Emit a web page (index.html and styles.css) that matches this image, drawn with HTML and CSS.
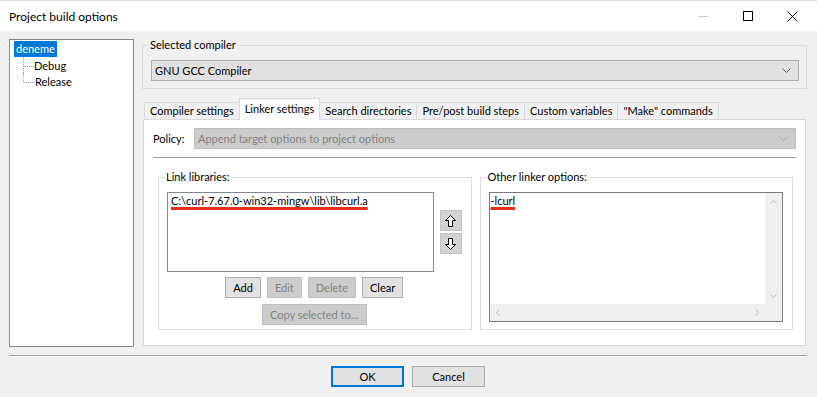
FILE: index.html
```html
<!doctype html>
<html>
<head>
    <meta charset="utf-8">
    <title>Project build options</title>
    <link rel="stylesheet" href="styles.css">
</head>
<body>
<div class="window">
    <div class="titlebar">
        <span class="title">Project build options</span>
        <div class="caption">
            <span class="cap"><svg width="10" height="10" viewBox="0 0 10 10"><path d="M0 5.5H10" stroke="#c8c8c8"/></svg></span>
            <span class="cap"><svg width="10" height="10" viewBox="0 0 10 10"><rect x="0.5" y="0.5" width="9" height="9" fill="none" stroke="#000"/></svg></span>
            <span class="cap"><svg width="11" height="11" viewBox="0 0 11 11"><path d="M0.5 0.5L10.5 10.5M10.5 0.5L0.5 10.5" stroke="#000"/></svg></span>
        </div>
    </div>

    <div class="client">
        <div class="main">
            <!-- targets tree -->
            <div class="tree">
                <div class="node"><span class="selected">deneme</span></div>
                <div class="node child">Debug</div>
                <div class="node child last">Release</div>
            </div>

            <div class="right">
                <fieldset class="group">
                    <legend>Selected compiler</legend>
                    <div class="combo">
                        <span>GNU GCC Compiler</span>
                        <svg width="9" height="5" viewBox="0 0 9 5"><path d="M0.5 0.5L4.5 4.5L8.5 0.5" fill="none" stroke="#606060"/></svg>
                    </div>
                </fieldset>

                <div class="tabs">
                    <span class="tab">Compiler settings</span>
                    <span class="tab active">Linker settings</span>
                    <span class="tab">Search directories</span>
                    <span class="tab">Pre/post build steps</span>
                    <span class="tab">Custom variables</span>
                    <span class="tab">"Make" commands</span>
                </div>

                <div class="panel">
                    <div class="policy">
                        <span class="policy-label">Policy:</span>
                        <div class="combo disabled">
                            <span>Append target options to project options</span>
                            <svg width="9" height="5" viewBox="0 0 9 5"><path d="M0.5 0.5L4.5 4.5L8.5 0.5" fill="none" stroke="#a8a8a8"/></svg>
                        </div>
                    </div>
                    <div class="rule"></div>

                    <div class="lists">
                        <fieldset class="group inner">
                            <legend>Link libraries:</legend>
                            <div class="libs-row">
                                <div class="listbox"><span class="marked">C:\curl-7.67.0-win32-mingw\lib\libcurl.a</span></div>
                                <div class="updown">
                                    <button class="arrow"><svg width="11" height="12" viewBox="0 0 11 12"><polygon points="5.5,0.5 10.5,5.5 7.5,5.5 7.5,11.5 3.5,11.5 3.5,5.5 0.5,5.5" fill="#fff" stroke="#000"/></svg></button>
                                    <button class="arrow"><svg width="11" height="12" viewBox="0 0 11 12"><polygon points="5.5,11.5 10.5,6.5 7.5,6.5 7.5,0.5 3.5,0.5 3.5,6.5 0.5,6.5" fill="#fff" stroke="#000"/></svg></button>
                                </div>
                            </div>
                            <div class="btn-row">
                                <button class="btn">Add</button>
                                <button class="btn" disabled>Edit</button>
                                <button class="btn" disabled>Delete</button>
                                <button class="btn">Clear</button>
                            </div>
                            <div class="btn-row second">
                                <button class="btn" disabled>Copy selected to...</button>
                            </div>
                        </fieldset>

                        <fieldset class="group inner">
                            <legend>Other linker options:</legend>
                            <div class="memo">
                                <div class="memo-text"><span class="marked">-lcurl</span></div>
                                <div class="vscroll">
                                    <span class="sb-btn"><svg width="7" height="4" viewBox="0 0 7 4"><path d="M0.5 3.5L3.5 0.5L6.5 3.5" fill="none" stroke="#c0c0c0"/></svg></span>
                                    <span class="sb-btn"><svg width="7" height="4" viewBox="0 0 7 4"><path d="M0.5 0.5L3.5 3.5L6.5 0.5" fill="none" stroke="#c0c0c0"/></svg></span>
                                </div>
                                <div class="hscroll">
                                    <span class="sb-btn"><svg width="4" height="7" viewBox="0 0 4 7"><path d="M3.5 0.5L0.5 3.5L3.5 6.5" fill="none" stroke="#c0c0c0"/></svg></span>
                                    <span class="sb-btn"><svg width="4" height="7" viewBox="0 0 4 7"><path d="M0.5 0.5L3.5 3.5L0.5 6.5" fill="none" stroke="#c0c0c0"/></svg></span>
                                </div>
                                <div class="corner"></div>
                            </div>
                        </fieldset>
                    </div>
                </div>
            </div>
        </div>

        <div class="separator"></div>
        <div class="dialog-buttons">
            <button class="btn default">OK</button>
            <button class="btn">Cancel</button>
        </div>
    </div>
</div>
</body>
</html>
```

FILE: styles.css
```css
* {
    box-sizing: border-box;
}

body {
    margin: 0;
    background: #f0f0f0;
    font: 11px Lato, "Liberation Sans", sans-serif;
    color: #000;
}

.window {
    width: 817px;
    height: 397px;
    background: #f0f0f0;
}

/* title bar */
.titlebar {
    height: 31px;
    background: #fff;
    border-top: 1px solid #dedede;
    display: flex;
    align-items: center;
    justify-content: space-between;
    padding-left: 9px;
}
.title {
    font-size: 12px;
}
.caption {
    display: flex;
    margin-right: 2px;
}
.cap {
    width: 45px;
    height: 30px;
    display: flex;
    align-items: center;
    justify-content: center;
}

.client {
    padding: 8px 10px 0 9px;
}
.main {
    display: grid;
    grid-template-columns: 125px 1fr;
    column-gap: 8px;
    height: 308px;
}

/* tree */
.tree {
    background: #fff;
    border: 1px solid #828790;
    padding: 1px 4px;
}
.node {
    height: 16px;
    display: flex;
    align-items: center;
}
.selected {
    background: #0078d7;
    color: #fff;
    padding: 0 2px;
    line-height: 16px;
}
.child {
    margin-left: 9px;
    border-left: 1px dotted #a0a0a0;
}
.child::before {
    content: "";
    width: 10px;
    height: 9px;
    align-self: flex-start;
    border-bottom: 1px dotted #a0a0a0;
}
.child.last {
    border-left: none;
}
.child.last::before {
    width: 11px;
    border-left: 1px dotted #a0a0a0;
}

.right {
    display: flex;
    flex-direction: column;
    margin-top: -1px;
}

/* group boxes */
.group {
    margin: 0;
    min-width: 0;
    border: 1px solid #dcdcdc;
    padding: 8px 7px 7px 8px;
}
.group legend {
    padding: 0 2px;
    margin-left: -3px;
    line-height: 14px;
}

.combo {
    height: 21px;
    background: #e1e1e1;
    border: 1px solid #adadad;
    display: flex;
    align-items: center;
    justify-content: space-between;
    padding: 0 7px 0 3px;
}
.combo.disabled {
    flex: 1;
    background: #cccccc;
    border-color: #bfbfbf;
    color: #838383;
}

/* tabs */
.tabs {
    display: flex;
    align-items: flex-end;
    margin: 9px 0 0 2px;
}
.tab {
    height: 17px;
    line-height: 15px;
    padding: 0 5px;
    border: 1px solid #d9d9d9;
    border-bottom: none;
    margin-right: -1px;
    background: #f0f0f0;
    white-space: nowrap;
}
.tab.active {
    height: 22px;
    padding-top: 2px;
    background: #fff;
    margin-bottom: -1px;
    position: relative;
    z-index: 1;
}

.panel {
    flex: 1;
    background: #fff;
    border: 1px solid #d9d9d9;
    margin: 0 1px 1px 1px;
    padding: 8px 9px 0 9px;
}
.policy {
    display: flex;
    align-items: center;
}
.policy-label {
    width: 41px;
}
.rule {
    height: 1px;
    background: #a0a0a0;
    margin-top: 8px;
}

.lists {
    display: grid;
    grid-template-columns: 1fr 1fr;
    gap: 8px;
    margin: 12px 3px 0 5px;
}
.group.inner {
    padding: 8px 9px 4px 8px;
}

.libs-row {
    display: flex;
    align-items: center;
    gap: 6px;
}
.listbox {
    flex: 1;
    height: 80px;
    background: #fff;
    border: 1px solid #828790;
    padding: 0 3px;
    line-height: 16px;
}
.marked {
    text-decoration: underline;
    text-decoration-color: #e2301f;
    text-decoration-thickness: 3px;
    text-underline-offset: 2px;
}
.updown {
    display: flex;
    flex-direction: column;
    gap: 2px;
}
.arrow {
    width: 22px;
    height: 21px;
    padding: 0;
    background: #d2d2d2;
    border: 1px solid #c4c4c4;
    display: flex;
    align-items: center;
    justify-content: center;
}

.btn-row {
    display: flex;
    justify-content: center;
    gap: 6px;
    margin-top: 5px;
}
.btn-row.second {
    margin-top: 6px;
}
.btn {
    height: 21px;
    padding: 0 7px;
    font: inherit;
    color: #000;
    background: #e1e1e1;
    border: 1px solid #adadad;
}
.btn:disabled {
    background: #cccccc;
    border-color: #bfbfbf;
    color: #838383;
}

/* multi line edit with scrollbars */
.memo {
    height: 130px;
    border: 1px solid #7a7a7a;
    background: #fff;
    display: grid;
    grid-template-columns: 1fr 17px;
    grid-template-rows: 1fr 17px;
}
.memo-text {
    padding: 0 1px;
    line-height: 16px;
}
.vscroll, .hscroll, .corner {
    background: #f0f0f0;
    display: flex;
    justify-content: space-between;
}
.vscroll {
    flex-direction: column;
}
.sb-btn {
    width: 17px;
    height: 17px;
    display: flex;
    align-items: center;
    justify-content: center;
}

/* bottom */
.separator {
    height: 2px;
    border-top: 1px solid #a0a0a0;
    border-bottom: 1px solid #fff;
    margin-top: 8px;
}
.dialog-buttons {
    display: flex;
    justify-content: center;
    gap: 8px;
    margin-top: 9px;
}
.dialog-buttons .btn {
    width: 73px;
}
.btn.default {
    border: 2px solid #0078d7;
}
```
